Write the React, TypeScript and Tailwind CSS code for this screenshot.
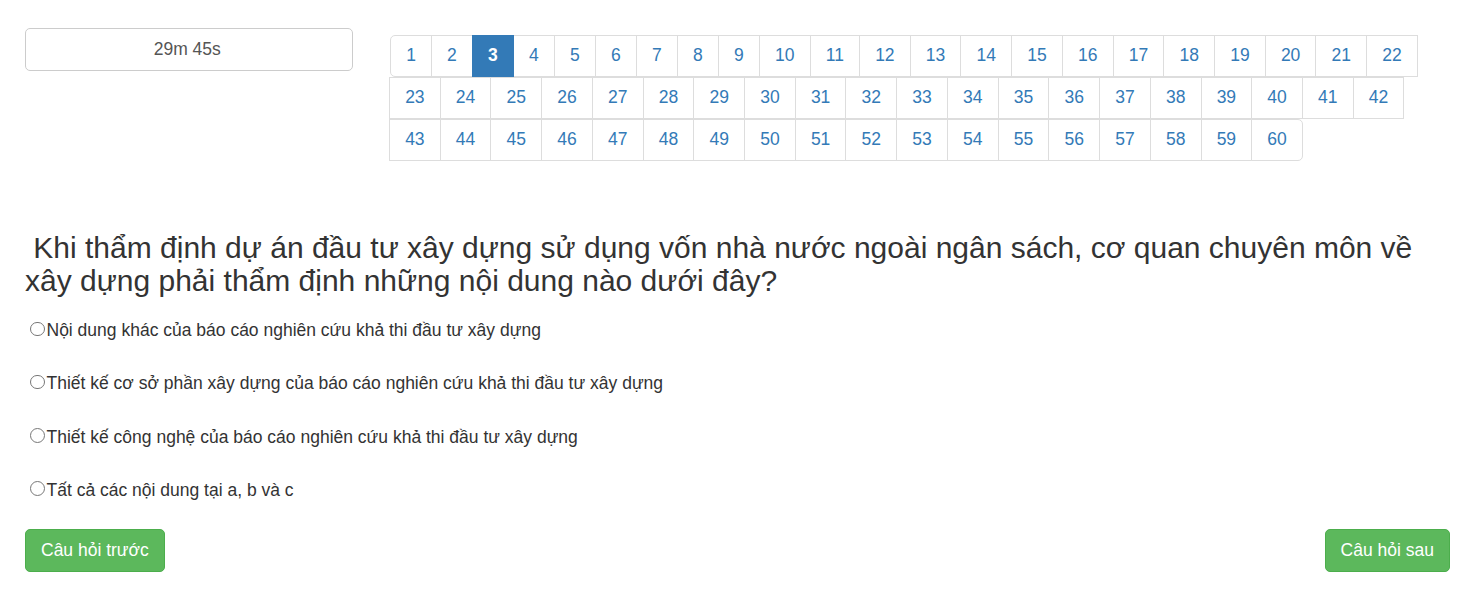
import React from "react";

const nums = Array.from({ length: 60 }, (_, i) => i + 1);

const options = [
  "Nội dung khác của báo cáo nghiên cứu khả thi đầu tư xây dựng",
  "Thiết kế cơ sở phần xây dựng của báo cáo nghiên cứu khả thi đầu tư xây dựng",
  "Thiết kế công nghệ của báo cáo nghiên cứu khả thi đầu tư xây dựng",
  "Tất cả các nội dung tại a, b và c",
];

export default function App() {
  return (
    <div
      className="min-h-[599px] bg-white px-[25px] text-[#333]"
      style={{ fontFamily: '"Liberation Sans", Arial, Helvetica, sans-serif' }}
    >
      <div className="flex items-start">
        <div className="mt-[28px] flex h-[42.5px] w-[327.5px] shrink-0 items-center justify-center rounded-[5px] border border-[#ccc] pr-[3px] text-[17.5px] leading-[25px] text-[#555]">
          29m 45s
        </div>
        <ul className="ml-[37.5px] mt-[35px] flex flex-1 flex-wrap">
          {nums.map((n, i) => {
            const first = i === 0;
            const last = i === nums.length - 1;
            const active = n === 3;
            return (
              <li key={n} className={first ? "ml-0" : "-ml-px"}>
                <a
                  href="#"
                  onClick={(e) => e.preventDefault()}
                  className={
                    "relative block h-[42px] border px-[15.125px] pb-[8px] pt-[7px] text-[17.5px] leading-[25px] " +
                    (active
                      ? "z-10 border-[#337ab7] bg-[#337ab7] font-bold text-white"
                      : "border-[#ddd] bg-white text-[#337ab7]") +
                    (first ? " rounded-l-[5px]" : "") +
                    (last ? " rounded-r-[5px]" : "")
                  }
                >
                  {n}
                </a>
              </li>
            );
          })}
        </ul>
      </div>

      <h3 className="mt-[70px] text-[30px] font-normal leading-[33px] text-[#333]">
        {"\u00a0Khi thẩm định dự án đầu tư xây dựng sử dụng vốn nhà nước ngoài ngân sách, cơ quan chuyên môn về xây dựng phải thẩm định những nội dung nào dưới đây?"}
      </h3>

      <div className="mt-[21px] flex flex-col gap-[28.33px]">
        {options.map((o) => (
          <label key={o} className="flex items-start text-[17.5px] leading-[25px] text-[#333]">
            <span className="ml-[5px] mr-[2px] mt-[3.5px] block h-[14.5px] w-[14.5px] shrink-0 rounded-full border border-[#777] bg-white" />
            <span>{o}</span>
          </label>
        ))}
      </div>

      <div className="mt-[26.5px] flex justify-between">
        <button className="h-[42.5px] rounded-[5px] border border-[#4cae4c] bg-[#5cb85c] px-[15px] text-[17.5px] leading-[25px] text-white">
          Câu hỏi trước
        </button>
        <button className="mr-px h-[42.5px] rounded-[5px] border border-[#4cae4c] bg-[#5cb85c] px-[15px] text-[17.5px] leading-[25px] text-white">
          Câu hỏi sau
        </button>
      </div>
    </div>
  );
}
